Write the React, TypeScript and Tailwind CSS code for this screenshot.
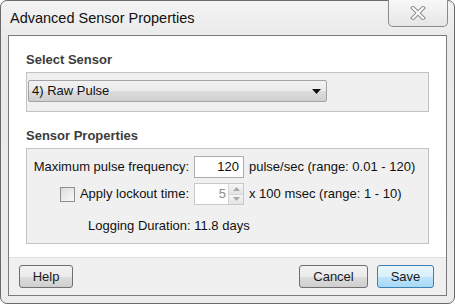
import React from 'react';

const font = "font-['Liberation_Sans',Arial,sans-serif]";

const grayBtn =
  "h-[23px] rounded-[3px] border border-[#707070] bg-[linear-gradient(to_bottom,#f2f2f2_0%,#ebebeb_50%,#dddddd_50%,#cfcfcf_100%)] text-[13px] text-[#1a1a1a] flex items-center justify-center";

function CloseButton() {
  return (
    <div className="-mt-[1px] mr-[6px] w-[60px] h-[27px] rounded-b-[5px] border border-[#8a8a8a] border-t-0 bg-[linear-gradient(to_bottom,#f7f7f7,#e6e6e6)] flex items-center justify-center">
      <svg width="18" height="14" viewBox="0 0 18 14">
        <path d="M4 2 L14 12 M14 2 L4 12" stroke="#8a8a8a" strokeWidth="4" strokeLinecap="square" />
        <path d="M4 2 L14 12 M14 2 L4 12" stroke="#ffffff" strokeWidth="2" strokeLinecap="square" />
      </svg>
    </div>
  );
}

function Spinner() {
  return (
    <div className="w-[50px] h-[22px] border border-[#c9c9c9] bg-white flex items-center">
      <span className="flex-1 text-right pr-[2px] text-[13px] text-[#8c8c8c]">5</span>
      <div className="w-[15px] h-full flex flex-col border-l border-[#d4d4d4]">
        <div className="flex-1 flex items-center justify-center bg-[linear-gradient(to_bottom,#f6f6f6,#e4e4e4)] border-b border-[#d4d4d4]">
          <svg width="7" height="4" viewBox="0 0 7 4">
            <path d="M0 4 L3.5 0 L7 4 Z" fill="#a8a8a8" />
          </svg>
        </div>
        <div className="flex-1 flex items-center justify-center bg-[linear-gradient(to_bottom,#f6f6f6,#e4e4e4)]">
          <svg width="7" height="4" viewBox="0 0 7 4">
            <path d="M0 0 L7 0 L3.5 4 Z" fill="#a8a8a8" />
          </svg>
        </div>
      </div>
    </div>
  );
}

export default function App() {
  return (
    <div className={`w-[455px] h-[307px] bg-white ${font}`}>
      <div className="w-[455px] h-[304px] rounded-[7px] border border-[#6a6a6a] bg-[linear-gradient(to_bottom,#f3f3f3,#e9e9e9_40px,#ececec)] flex flex-col">
        {/* title bar */}
        <div className="h-[34px] flex justify-between items-start">
          <div className="pl-[9px] pt-[8px] text-[14.5px] leading-[18px] text-[#111]">
            Advanced Sensor Properties
          </div>
          <CloseButton />
        </div>

        {/* client area */}
        <div className="mx-[7px] border border-[#7b7b7b] flex flex-col">
          <div className="h-[221px] bg-white px-[17px] pt-[16px] flex flex-col">
            <div className="text-[13px] leading-[16px] font-bold text-[#3c3c3c]">Select Sensor</div>
            <div className="mt-[4px] h-[40px] border border-[#c3c3c3] bg-[#f0f0f0] pl-[1px] pt-[7px]">
              <div className="w-[299px] h-[22px] rounded-[2px] border border-[#a3a3a3] bg-[linear-gradient(to_bottom,#f2f2f2_0%,#ebebeb_50%,#dddddd_50%,#cfcfcf_100%)] flex items-center justify-between pl-[3px] pr-[5px]">
                <span className="text-[13px] text-[#111]">4) Raw Pulse</span>
                <svg width="9" height="5" viewBox="0 0 9 5">
                  <path d="M0 0 L9 0 L4.5 5 Z" fill="#111" />
                </svg>
              </div>
            </div>

            <div className="mt-[16px] text-[13px] leading-[16px] font-bold text-[#3c3c3c]">Sensor Properties</div>
            <div className="mt-[4px] h-[96px] border border-[#c3c3c3] bg-[#f0f0f0] pt-[7px] text-[13px] text-[#111]">
              <div className="grid grid-cols-[162px_50px_auto] gap-x-[5px] gap-y-[5px] items-center">
                <span className="text-right">Maximum pulse frequency:</span>
                <div className="w-[50px] h-[22px] border border-[#acacac] bg-white flex items-center justify-end pr-[4px]">
                  120
                </div>
                <span>pulse/sec (range: 0.01 - 120)</span>

                <div className="flex items-center justify-end gap-[5px]">
                  <span className="w-[15px] h-[15px] border border-[#8e8f8f] bg-[linear-gradient(135deg,#dcdcdc,#f8f8f8)]" />
                  <span>Apply lockout time:</span>
                </div>
                <Spinner />
                <span>x 100 msec (range: 1 - 10)</span>
              </div>
              <div className="mt-[13px] pl-[61px] leading-[16px]">Logging Duration: 11.8 days</div>
            </div>
          </div>

          {/* button bar */}
          <div className="h-[38px] border-t border-[#dfdfdf] bg-[#f0f0f0] pl-[10px] pr-[12px] pt-[7px] flex items-start">
            <button className={`${grayBtn} w-[54px]`}>Help</button>
            <div className="flex-1" />
            <button className={`${grayBtn} w-[69px]`}>Cancel</button>
            <button className="ml-[9px] w-[57px] h-[23px] rounded-[3px] border border-[#3c7fb1] bg-[linear-gradient(to_bottom,#eaf6fd_0%,#d9f0fc_50%,#bee6fd_50%,#a7d9f5_100%)] text-[13px] text-[#1a1a1a] flex items-center justify-center">
              Save
            </button>
          </div>
        </div>
      </div>
    </div>
  );
}
